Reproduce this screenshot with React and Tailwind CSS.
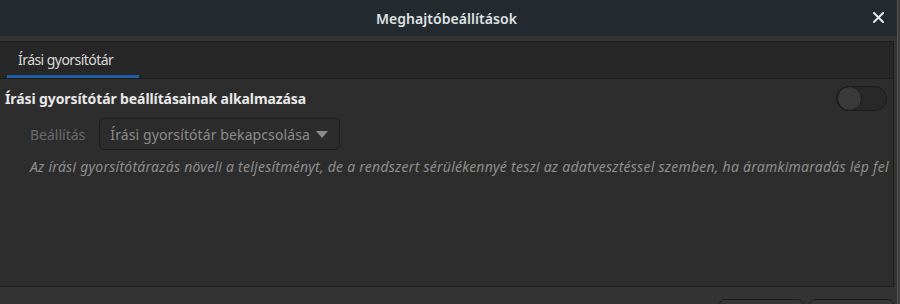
export default function App() {
  return (
    <div className="w-[900px] h-[304px] flex bg-[#3b3b3b] overflow-hidden" style={{ fontFamily: '"Noto Sans", "Open Sans", sans-serif' }}>
      <div className="w-[897px] h-full flex flex-col">
        <div className="h-[36px] shrink-0 bg-[#232b31] relative flex items-center justify-center">
          <span className="text-[14px] font-semibold text-[#dfe1e2] tracking-[0.05px] pr-[4px]">Meghajtóbeállítások</span>
          <svg className="absolute right-[13px] top-[12px]" width="11" height="11" viewBox="0 0 11 11">
            <path d="M1 1 L10 10 M10 1 L1 10" stroke="#e4e6e7" strokeWidth="2" strokeLinecap="square" />
          </svg>
        </div>
        <div className="flex-1 bg-[#333333] flex flex-col pt-[5px]">
          <div className="w-[894px] h-[246px] border-y border-r border-[#1d1d1d] flex flex-col">
            <div className="h-[37px] shrink-0 bg-[#272727] border-b border-[#1d1d1d] flex items-end pl-[7px]">
              <div className="w-[132px] h-full flex flex-col">
                <div className="flex-1 flex items-center pl-[11px] pt-[1px] text-[14px] text-[#dadada] tracking-[-0.55px]">Írási gyorsítótár</div>
                <div className="h-[3px] bg-[#1f5fa8]" />
              </div>
            </div>
            <div className="flex-1 bg-[#2d2d2d] flex flex-col">
              <div className="flex items-center justify-between pl-[5px] pr-[6px] pt-[7px]">
                <span className="text-[14px] font-bold text-[#e8e8e8] tracking-[-0.1px]">Írási gyorsítótár beállításainak alkalmazása</span>
                <div className="w-[51px] h-[25px] rounded-full bg-[#282828] border border-[#1b1b1b] relative">
                  <div className="absolute left-[0px] top-[-1px] w-[25px] h-[25px] rounded-full bg-[#3a3a3a] border border-[#1b1b1b]" />
                </div>
              </div>
              <div className="flex items-center pl-[30px] pt-[7px] gap-[14px]">
                <span className="text-[14px] text-[#6b6b6b] tracking-[0px]">Beállítás</span>
                <div className="w-[241px] h-[32px] rounded-[5px] border border-[#1c1c1c] bg-[#2c2c2c] flex items-center pl-[10px] gap-[6px]">
                  <span className="text-[14px] text-[#8b8b8b] tracking-[0.1px]">Írási gyorsítótár bekapcsolása</span>
                  <svg width="12" height="7" viewBox="0 0 12 7">
                    <path d="M0 0 L12 0 L6 7 Z" fill="#8b8b8b" />
                  </svg>
                </div>
              </div>
              <div className="pl-[30px] pt-[6px] text-[14px] italic text-[#8d8d8d] tracking-[0.25px] whitespace-nowrap">
                Az írási gyorsítótárazás növeli a teljesítményt, de a rendszert sérülékennyé teszi az adatvesztéssel szemben, ha áramkimaradás lép fel
              </div>
            </div>
          </div>
          <div className="flex justify-end gap-[5px] pr-[3px] pt-[12px]">
            <div className="w-[85px] h-[20px] rounded-t-[6px] border border-[#1d1d1d] bg-[#363636]" />
            <div className="w-[85px] h-[20px] rounded-t-[6px] border border-[#1d1d1d] bg-[#363636]" />
          </div>
        </div>
      </div>
      <div className="w-[1px] h-full bg-[#555555]" />
      <div className="flex-1 h-full bg-[#3d3d3d]" />
    </div>
  );
}
